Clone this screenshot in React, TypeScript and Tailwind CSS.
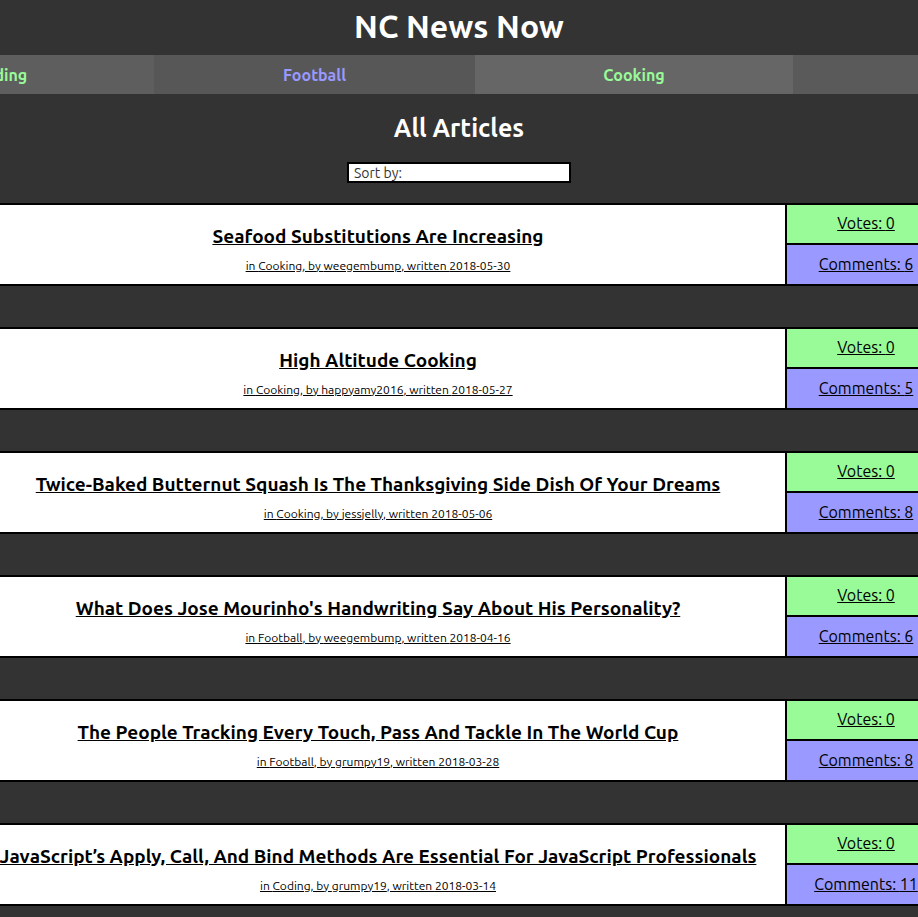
import React from "react";

const articles = [
  { title: "Seafood Substitutions Are Increasing", topic: "Cooking", author: "weegembump", date: "2018-05-30", votes: 0, comments: 6 },
  { title: "High Altitude Cooking", topic: "Cooking", author: "happyamy2016", date: "2018-05-27", votes: 0, comments: 5 },
  { title: "Twice-Baked Butternut Squash Is The Thanksgiving Side Dish Of Your Dreams", topic: "Cooking", author: "jessjelly", date: "2018-05-06", votes: 0, comments: 8 },
  { title: "What Does Jose Mourinho's Handwriting Say About His Personality?", topic: "Football", author: "weegembump", date: "2018-04-16", votes: 0, comments: 6 },
  { title: "The People Tracking Every Touch, Pass And Tackle In The World Cup", topic: "Football", author: "grumpy19", date: "2018-03-28", votes: 0, comments: 8 },
  { title: "JavaScript’s Apply, Call, And Bind Methods Are Essential For JavaScript Professionals", topic: "Coding", author: "grumpy19", date: "2018-03-14", votes: 0, comments: 11 },
];

export default function App() {
  return (
    <div
      className="w-[918px] min-h-[917px] overflow-hidden bg-[#333333]"
      style={{ fontFamily: "Ubuntu, Lato, 'Noto Sans', sans-serif" }}
    >
      <header className="h-[55px] flex items-center justify-center pb-[4px]">
        <h1 className="text-[32px] font-bold text-white leading-none">NC News Now</h1>
      </header>
      <nav className="h-[39px] flex ml-[-152px] w-[1300px]">
        <div className="w-[306px] flex items-center justify-center bg-[#5e5e5e] text-[16px] font-bold text-[#98fb98]">Coding</div>
        <div className="w-[321px] flex items-center justify-center bg-[#575757] text-[16px] font-bold text-[#9999ff]">Football</div>
        <div className="w-[318px] flex items-center justify-center bg-[#666666] text-[16px] font-bold text-[#98fb98]">Cooking</div>
        <div className="w-[320px] flex items-center justify-center bg-[#5a5a5a]"></div>
      </nav>
      <div className="flex flex-col items-center pt-[20px]">
        <h2 className="h-[28px] leading-[28px] text-[25px] font-bold text-white">All Articles</h2>
        <div className="mt-[20px] w-[224px] h-[21px] border-2 border-black bg-white flex items-center px-[5px] text-[14px] text-[#333333] leading-none">
          Sort by:
        </div>
      </div>
      <div className="mt-[20px] ml-[-31px] w-[978px] flex flex-col gap-[41px] pb-[11px]">
        {articles.map((a) => (
          <div key={a.title} className="h-[83px] flex border-2 border-black bg-white">
            <div className="flex-1 flex flex-col items-center justify-center pt-[8px]">
              <a className="text-[19px] font-bold text-black underline leading-[22px]">{a.title}</a>
              <a className="mt-[12px] text-[12px] text-black underline leading-[14px]">
                in {a.topic}, by {a.author}, written {a.date}
              </a>
            </div>
            <div className="w-[160px] flex flex-col border-l-2 border-black">
              <div className="h-[40px] bg-[#98fb98] border-b-2 border-black flex items-center justify-center text-[16px] text-black underline pb-[2px]">
                Votes: {a.votes}
              </div>
              <div className="flex-1 bg-[#9999ff] flex items-center justify-center text-[16px] text-black underline pb-[2px]">
                Comments: {a.comments}
              </div>
            </div>
          </div>
        ))}
      </div>
    </div>
  );
}
